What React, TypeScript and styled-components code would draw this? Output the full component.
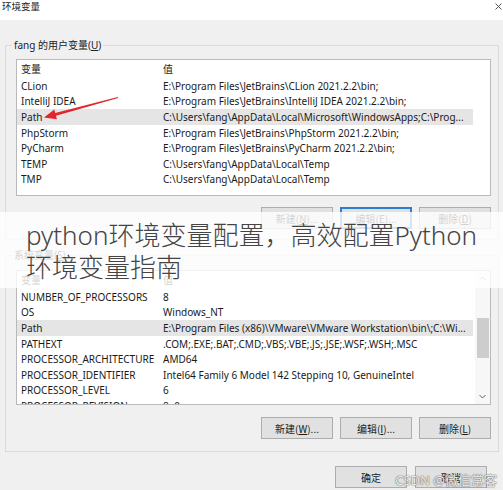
import React from "react";
import styled, { createGlobalStyle } from "styled-components";

const Global = createGlobalStyle`
  html, body { margin: 0; padding: 0; background: #f0f0f0; overflow: hidden; }
  body { font-family: "Noto Sans", "Noto Sans CJK SC", sans-serif; }
`;

const Window = styled.div`
  position: relative;
  width: 503px;
  height: 490px;
  background: #f0f0f0;
  display: flex;
  flex-direction: column;
  overflow: hidden;
  color: #1a1a1a;
  font-size: 10px;
`;

const TitleBar = styled.div`
  height: 20px;
  background: #ffffff;
  display: flex;
  align-items: flex-start;
  justify-content: space-between;
  padding: 0 1px 0 2px;
`;

const Title = styled.span`
  font-family: "Noto Sans CJK SC", sans-serif;
  font-size: 9.5px;
  line-height: 12px;
  color: #222;
`;

const CloseIcon = styled.svg`
  margin-top: 3px;
  width: 7px;
  height: 7px;
`;

const Group = styled.section<{ $top: number; $padBottom: number }>`
  margin: ${(p) => p.$top}px 4px 0 5px;
  border: 1px solid #dadada;
  padding: 0 7px ${(p) => p.$padBottom}px 10px;
  display: flex;
  flex-direction: column;
`;

const GroupLabel = styled.div<{ $gap: number }>`
  align-self: flex-start;
  margin: -9px 0 ${(p) => p.$gap}px -4px;
  padding: 0 2px;
  background: #f0f0f0;
  font-family: "Noto Sans", "Noto Sans CJK SC", sans-serif;
  font-size: 10px;
  line-height: 16px;
  color: #222;
`;

const ListBox = styled.div<{ $height: number }>`
  height: ${(p) => p.$height}px;
  background: #fff;
  border: 1px solid #b9b9b9;
  box-sizing: border-box;
  display: flex;
  overflow: hidden;
`;

const Rows = styled.div`
  width: 456px;
  display: flex;
  flex-direction: column;
`;

const Row = styled.div<{ $selected?: boolean; $header?: boolean }>`
  display: grid;
  grid-template-columns: 142px 1fr;
  height: ${(p) => (p.$header ? "18px" : "15.6px")};
  align-items: center;
  padding-left: 4px;
  background: ${(p) => (p.$selected ? "#e5e5e5" : "transparent")};
  white-space: nowrap;
  flex-shrink: 0;
`;

const Cell = styled.span`
  font-size: 10px;
  line-height: 14px;
  overflow: hidden;
`;

const HeaderCell = styled.span`
  font-family: "Noto Sans CJK SC", sans-serif;
  font-size: 10px;
  line-height: 14px;
`;

const ScrollBar = styled.div`
  margin-left: auto;
  width: 15px;
  background: #f7f7f7;
  display: flex;
  flex-direction: column;
  align-items: center;
`;

const ScrollArrow = styled.svg`
  width: 15px;
  height: 15px;
  flex-shrink: 0;
`;

const Thumb = styled.div`
  margin-top: 32px;
  width: 12px;
  height: 40px;
  background: #cdcdcd;
`;

const ButtonRow = styled.div<{ $gap: number }>`
  margin-top: ${(p) => p.$gap}px;
  display: flex;
  justify-content: flex-end;
  gap: 7px;
`;

const Button = styled.button<{ $focused?: boolean }>`
  width: 72px;
  height: 22px;
  padding: 0;
  box-sizing: border-box;
  background: #e1e1e1;
  border: 1px solid ${(p) => (p.$focused ? "#2f7fd0" : "#adadad")};
  box-shadow: ${(p) => (p.$focused ? "inset 0 0 0 1px #2f7fd0" : "none")};
  font-family: "Noto Sans CJK SC", sans-serif;
  font-size: 10px;
  color: #1a1a1a;
  u { text-decoration: underline; }
`;

const DialogButtons = styled.div`
  margin: 14px 16px 0 0;
  display: flex;
  justify-content: flex-end;
  gap: 8px;
`;

const Band = styled.div`
  position: absolute;
  left: 0;
  right: 0;
  top: 212px;
  height: 76px;
  box-sizing: border-box;
  padding: 7px 20px 0 26px;
  background: rgba(255, 255, 255, 0.8);
`;

const BandText = styled.div`
  font-family: "Noto Sans", "Noto Sans CJK SC", sans-serif;
  font-weight: 300;
  font-size: 26px;
  line-height: 32px;
  color: #444;
`;

const Watermark = styled.div`
  position: absolute;
  right: 6px;
  bottom: 2px;
  font-family: "Noto Sans", "Noto Sans CJK SC", sans-serif;
  font-size: 13px;
  line-height: 16px;
  color: rgba(255, 255, 255, 0.9);
  text-shadow: 0 0 1.5px #555, 0 0 1px #777;
`;

const ArrowSvg = styled.svg`
  position: absolute;
  left: 0;
  top: 0;
  width: 503px;
  height: 490px;
  pointer-events: none;
`;

const userVars: [string, string][] = [
  ["CLion", "E:\\Program Files\\JetBrains\\CLion 2021.2.2\\bin;"],
  ["IntelliJ IDEA", "E:\\Program Files\\JetBrains\\IntelliJ IDEA 2021.2.2\\bin;"],
  ["Path", "C:\\Users\\fang\\AppData\\Local\\Microsoft\\WindowsApps;C:\\Prog..."],
  ["PhpStorm", "E:\\Program Files\\JetBrains\\PhpStorm 2021.2.2\\bin;"],
  ["PyCharm", "E:\\Program Files\\JetBrains\\PyCharm 2021.2.2\\bin;"],
  ["TEMP", "C:\\Users\\fang\\AppData\\Local\\Temp"],
  ["TMP", "C:\\Users\\fang\\AppData\\Local\\Temp"],
];

const sysVars: [string, string][] = [
  ["NUMBER_OF_PROCESSORS", "8"],
  ["OS", "Windows_NT"],
  ["Path", "E:\\Program Files (x86)\\VMware\\VMware Workstation\\bin\\;C:\\Wi..."],
  ["PATHEXT", ".COM;.EXE;.BAT;.CMD;.VBS;.VBE;.JS;.JSE;.WSF;.WSH;.MSC"],
  ["PROCESSOR_ARCHITECTURE", "AMD64"],
  ["PROCESSOR_IDENTIFIER", "Intel64 Family 6 Model 142 Stepping 10, GenuineIntel"],
  ["PROCESSOR_LEVEL", "6"],
  ["PROCESSOR_REVISION", "8e0a"],
];

function VarList({ rows, height, scroll }: { rows: [string, string][]; height: number; scroll?: boolean }) {
  return (
    <ListBox $height={height}>
      <Rows>
        <Row $header>
          <HeaderCell>变量</HeaderCell>
          <HeaderCell>值</HeaderCell>
        </Row>
        {rows.map(([k, v]) => (
          <Row key={k} $selected={k === "Path"}>
            <Cell>{k}</Cell>
            <Cell>{v}</Cell>
          </Row>
        ))}
      </Rows>
      {scroll && (
        <ScrollBar>
          <ScrollArrow viewBox="0 0 15 15">
            <path d="M4.5 9 L7.5 6 L10.5 9" fill="none" stroke="#9a9a9a" strokeWidth="1" />
          </ScrollArrow>
          <Thumb />
          <ScrollArrow viewBox="0 0 15 15" style={{ marginTop: "auto" }}>
            <path d="M4.5 6 L7.5 9 L10.5 6" fill="none" stroke="#606060" strokeWidth="1" />
          </ScrollArrow>
        </ScrollBar>
      )}
    </ListBox>
  );
}

export default function App() {
  return (
    <>
      <Global />
      <Window>
        <TitleBar>
          <Title>环境变量</Title>
          <CloseIcon viewBox="0 0 7 7">
            <path d="M0.5 0.5 L6.5 6.5 M6.5 0.5 L0.5 6.5" stroke="#444" strokeWidth="0.9" />
          </CloseIcon>
        </TitleBar>

        <Group $top={25} $padBottom={10}>
          <GroupLabel $gap={6}>
            fang 的用户变量(<u>U</u>)
          </GroupLabel>
          <VarList rows={userVars} height={137} />
          <ButtonRow $gap={11}>
            <Button>新建(<u>N</u>)...</Button>
            <Button $focused>编辑(<u>E</u>)...</Button>
            <Button>删除(<u>D</u>)</Button>
          </ButtonRow>
        </Group>

        <Group $top={15} $padBottom={12}>
          <GroupLabel $gap={7}>
            系统变量(<u>S</u>)
          </GroupLabel>
          <VarList rows={sysVars} height={135} scroll />
          <ButtonRow $gap={12}>
            <Button>新建(<u>W</u>)...</Button>
            <Button>编辑(<u>I</u>)...</Button>
            <Button>删除(<u>L</u>)</Button>
          </ButtonRow>
        </Group>

        <DialogButtons>
          <Button>确定</Button>
          <Button>取消</Button>
        </DialogButtons>

        <ArrowSvg viewBox="0 0 503 490">
          <path
            d="M118.2 98.1 L117.8 96.9 L55.2 113.0 L54.3 109.6 L44 117.5 L56.9 119.2 L56.0 115.8 Z"
            fill="#e3262b"
          />
        </ArrowSvg>

        <Band>
          <BandText>python环境变量配置，高效配置Python环境变量指南</BandText>
        </Band>

        <Watermark>CSDN @微信常客</Watermark>
      </Window>
    </>
  );
}
